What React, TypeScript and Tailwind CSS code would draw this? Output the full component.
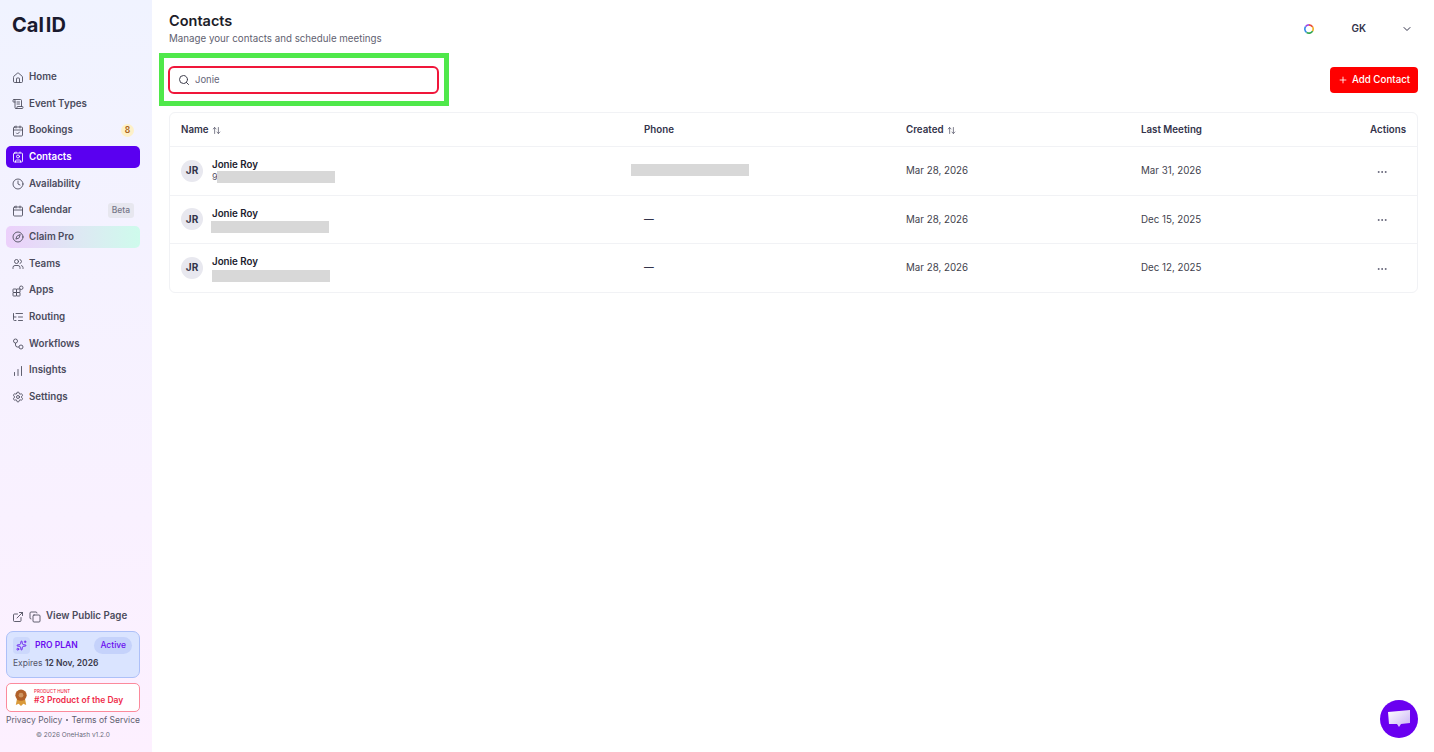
import {
  Calendar,
  CalendarCheck,
  ChartNoAxesColumnIncreasing,
  ChevronDown,
  Clock,
  Compass,
  Contact,
  Copy,
  Ellipsis,
  ExternalLink,
  House,
  ListTree,
  Plus,
  ScrollText,
  Search,
  Settings,
  Sparkles,
  Users,
  ArrowUpDown,
} from "lucide-react";
import type { ComponentType } from "react";

type IconProps = { className?: string; strokeWidth?: number };

type NavItem = {
  label: string;
  icon: ComponentType<IconProps>;
  active?: boolean;
  claim?: boolean;
  count?: string;
  beta?: boolean;
};

function AppsIcon({ className, strokeWidth }: IconProps) {
  return (
    <svg viewBox="0 0 24 24" className={className} fill="none" stroke="currentColor" strokeWidth={strokeWidth}>
      <rect x="2" y="8" width="7" height="7" rx="1" />
      <rect x="2" y="15" width="7" height="7" rx="1" />
      <rect x="9" y="15" width="7" height="7" rx="1" />
      <rect x="9" y="8" width="7" height="7" rx="1" />
      <circle cx="18.5" cy="5.5" r="3.5" />
    </svg>
  );
}

function WorkflowsIcon({ className, strokeWidth }: IconProps) {
  return (
    <svg viewBox="0 0 24 24" className={className} fill="none" stroke="currentColor" strokeWidth={strokeWidth}>
      <circle cx="7" cy="6" r="4" />
      <circle cx="18" cy="18" r="4" />
      <path d="M7 10v4a4 4 0 0 0 4 4h3" />
    </svg>
  );
}

const navItems: NavItem[] = [
  { label: "Home", icon: House },
  { label: "Event Types", icon: ScrollText },
  { label: "Bookings", icon: CalendarCheck, count: "8" },
  { label: "Contacts", icon: Contact, active: true },
  { label: "Availability", icon: Clock },
  { label: "Calendar", icon: Calendar, beta: true },
  { label: "Claim Pro", icon: Compass, claim: true },
  { label: "Teams", icon: Users },
  { label: "Apps", icon: AppsIcon },
  { label: "Routing", icon: ListTree },
  { label: "Workflows", icon: WorkflowsIcon },
  { label: "Insights", icon: ChartNoAxesColumnIncreasing },
  { label: "Settings", icon: Settings },
];

const contacts = [
  { created: "Mar 28, 2026", last: "Mar 31, 2026", prefix: "9", phone: false, bar: "-ml-px" },
  { created: "Mar 28, 2026", last: "Dec 15, 2025", prefix: "", phone: true, bar: "-ml-px translate-y-[2px]" },
  { created: "Mar 28, 2026", last: "Dec 12, 2025", prefix: "", phone: true, bar: "translate-y-[2px]" },
];

function Sidebar() {
  return (
    <aside className="flex h-[752px] w-[152px] shrink-0 flex-col bg-gradient-to-b from-[#f0f3ff] to-[#fdf0ff]">
      <div className="flex pl-3 pt-[11px] text-[20px] leading-[28px] font-bold text-[#1a1a2e]">
        <span>Cal</span>
        <span className="ml-[2px]">ID</span>
      </div>
      <nav className="mt-[27.5px] flex w-[134px] flex-col gap-[4.65px] ml-[6px]">
        {navItems.map((item) => (
          <div
            key={item.label}
            className={`flex h-[22px] items-center gap-[5px] rounded-[5px] pl-[6px] pr-[6px] text-[9.75px] font-semibold ${
              item.active
                ? "bg-[#5a00f0] text-white"
                : item.claim
                  ? "bg-gradient-to-r from-[#ecd0fb] to-[#cefbec] text-[#4b4b5c]"
                  : "text-[#4b4b5c]"
            }`}
          >
            <item.icon className="h-[12px] w-[12px] shrink-0" strokeWidth={1.75} />
            <span className="flex-1">{item.label}</span>
            {item.count && (
              <span className="flex h-[13px] w-[13px] items-center justify-center rounded-full bg-[#fdf0c8] text-[8.5px] font-semibold text-[#a8601a]">
                {item.count}
              </span>
            )}
            {item.beta && (
              <span className="rounded-[3px] bg-[#e7e7ef] px-1 py-[1px] text-[8.5px] font-medium text-[#77778a]">Beta</span>
            )}
          </div>
        ))}
      </nav>

      <div className="mt-auto ml-[6px] w-[134px] pb-[11px]">
        <div className="flex items-center pl-[6px] text-[9.75px] font-semibold text-[#4b4b5c]">
          <ExternalLink className="h-[12px] w-[12px]" strokeWidth={1.75} />
          <Copy className="ml-[5px] h-[12px] w-[12px]" strokeWidth={1.75} />
          <span className="ml-[5px]">View Public Page</span>
        </div>

        <div className="mt-[7px] h-[47px] rounded-[7px] border border-[#adc0f8] bg-[#dae4ff] pl-[6px] pr-[7px] pt-[5px]">
          <div className="flex items-center">
            <span className="flex h-[17px] w-[17px] items-center justify-center rounded-[4px] bg-[#ccd8fc]">
              <Sparkles className="h-[11px] w-[11px] text-[#6a1cf0]" strokeWidth={2} />
            </span>
            <span className="ml-[5px] text-[8.5px] font-semibold text-[#6a0cf0]">PRO PLAN</span>
            <span className="ml-auto rounded-full bg-[#c5d2fb] px-[6px] py-[2px] text-[8.5px] font-medium text-[#6a0cf0]">
              Active
            </span>
          </div>
          <div className="mt-[3px] text-[8.5px] text-[#55556a]">
            Expires <span className="font-semibold text-[#3a3a4c]">12 Nov, 2026</span>
          </div>
        </div>

        <div className="mt-[5px] flex h-[29px] items-center rounded-[5px] border border-[#fb8a9c] bg-white pl-[7px]">
          <svg viewBox="0 0 14 18" className="h-[17px] w-[14px]">
            <path d="M3 9 1.5 17l3-1.5L7 18l2.5-2.5 3 1.5L11 9Z" fill="#d99a3a" />
            <circle cx="7" cy="6.5" r="6" fill="#b0602a" />
            <circle cx="7" cy="6.5" r="2.5" fill="#cf9560" />
          </svg>
          <div className="ml-[6px]">
            <div className="text-[4.5px] leading-[6px] font-medium text-[#ef2b4a]">PRODUCT HUNT</div>
            <div className="text-[8.5px] leading-[11px] font-semibold text-[#ef2b4a]">#3 Product of the Day</div>
          </div>
        </div>

        <div className="mt-[1px] flex items-center justify-center whitespace-nowrap text-[8.5px] leading-[14px] text-[#5f5f70]">
          <span>Privacy Policy</span>
          <span className="mx-1 h-[2px] w-[2px] rounded-full bg-[#5f5f70]"></span>
          <span>Terms of Service</span>
        </div>
        <div className="mt-[2px] text-center text-[6.5px] leading-[12px] text-[#6a6a7a]">© 2026 OneHash v1.2.0</div>
      </div>
    </aside>
  );
}

function ContactRow({ row }: { row: (typeof contacts)[number] }) {
  return (
    <div className="grid h-[48.5px] grid-cols-[463px_262px_235px_1fr] items-center border-t border-[#f1f2f5] px-[11px] text-[9.75px] text-[#3f3f4d]">
      <div className="flex items-center gap-[9px]">
        <span className="flex h-[22px] w-[22px] items-center justify-center rounded-full bg-[#e8e8ef] text-[10px] font-bold text-[#33334a]">
          JR
        </span>
        <div>
          <div className="text-[9.75px] leading-[14px] font-semibold text-[#20202c]">Jonie Roy</div>
          <div className="mt-[-2px] flex h-[13px] items-center text-[9px] text-[#55556a]">
            {row.prefix}
            <span className={`inline-block h-3 w-[118px] bg-[#d8d8d8] ${row.bar}`}></span>
          </div>
        </div>
      </div>
      <div className="font-medium text-[#33334a]">
        {row.phone ? "—" : <span className="-ml-[13px] -mt-[2px] block h-3 w-[118px] bg-[#d8d8d8]"></span>}
      </div>
      <div className="mt-[2px]">{row.created}</div>
      <div className="mt-[2px] flex items-center justify-between">
        <span>{row.last}</span>
        <Ellipsis className="mr-[18px] h-[12px] w-[12px] text-[#55556a]" strokeWidth={1.75} />
      </div>
    </div>
  );
}

function SortIcon() {
  return <ArrowUpDown className="ml-[3px] inline h-[9px] w-[9px] text-[#55556a]" strokeWidth={2} />;
}

export default function App() {
  return (
    <div className="flex h-[752px] w-[1434px] overflow-hidden bg-white font-['Inter',sans-serif]">
      <Sidebar />

      <main className="relative flex-1 pl-[17px] pr-4">
        <div className="flex items-start justify-between pt-[12px]">
          <div>
            <h1 className="text-[14.5px] leading-[18px] font-semibold text-[#1c1c28]">Contacts</h1>
            <p className="mt-[1px] text-[9.75px] leading-[15px] text-[#5f5f70]">Manage your contacts and schedule meetings</p>
          </div>
          <div className="flex items-center pt-[9px]">
            <svg viewBox="0 0 12 12" className="h-[10px] w-[10px]" fill="none" strokeWidth="2">
              <path d="M6 1a5 5 0 0 1 4.3 2.5" stroke="#e8503a" />
              <path d="M10.3 3.5a5 5 0 0 1 0 5" stroke="#f3b32c" />
              <path d="M10.3 8.5A5 5 0 0 1 3 10" stroke="#34a853" />
              <path d="M3 10A5 5 0 0 1 2 3" stroke="#3a8ee8" />
              <path d="M2 3a5 5 0 0 1 4-2" stroke="#a04ae8" />
            </svg>
            <span className="ml-[37px] text-[10px] font-semibold text-[#33334a]">GK</span>
            <ChevronDown className="ml-[35px] mr-[5px] h-[12px] w-[12px] text-[#33334a]" strokeWidth={2} />
          </div>
        </div>

        <div className="mt-[20px] flex items-center justify-between">
          <div className="relative -ml-px h-[28px] w-[271px]">
            <div className="flex h-full items-center rounded-[6px] border-2 border-[#f0163a] bg-white pl-[8px] text-[9.5px] text-[#66667a]">
              <Search className="h-[12px] w-[12px] text-[#3f3f4d]" strokeWidth={2} />
              <span className="ml-[5px] pt-[1px]">Jonie</span>
            </div>
            <div className="pointer-events-none absolute -top-[13px] -bottom-[12px] -left-[9px] -right-[10px] border-[5px] border-[#4fe84a]"></div>
          </div>
          <button className="flex h-[26px] w-[88px] items-center justify-center gap-[4px] rounded-[4px] bg-[#ff0000] text-[9.75px] font-medium text-white">
            <Plus className="h-[10px] w-[10px]" strokeWidth={2} />
            Add Contact
          </button>
        </div>

        <section className="mt-[18px] w-[1249px] overflow-hidden rounded-[6px] border border-[#f1f2f5] bg-white">
          <div className="grid h-[33px] grid-cols-[463px_262px_235px_1fr] items-center px-[11px] pt-[1px] text-[9.75px] font-semibold text-[#33334a]">
            <div>Name<SortIcon /></div>
            <div>Phone</div>
            <div>Created<SortIcon /></div>
            <div className="flex justify-between">
              <span>Last Meeting</span>
              <span>Actions</span>
            </div>
          </div>
          {contacts.map((row, i) => (
            <ContactRow key={i} row={row} />
          ))}
        </section>

        <button className="absolute right-[16px] bottom-[14px] flex h-[38px] w-[38px] items-center justify-center rounded-full bg-[#6a00f0]">
          <svg viewBox="0 0 24 20" className="h-[20px] w-[24px]">
            <defs>
              <linearGradient id="chat" x1="0" y1="0" x2="1" y2="1">
                <stop offset="0" stopColor="#ffffff" />
                <stop offset="1" stopColor="#c9b2f5" />
              </linearGradient>
            </defs>
            <path d="M1 3 23 1v13l-9 1-2 3-2-3H2Z" fill="url(#chat)" />
          </svg>
        </button>
      </main>
    </div>
  );
}
